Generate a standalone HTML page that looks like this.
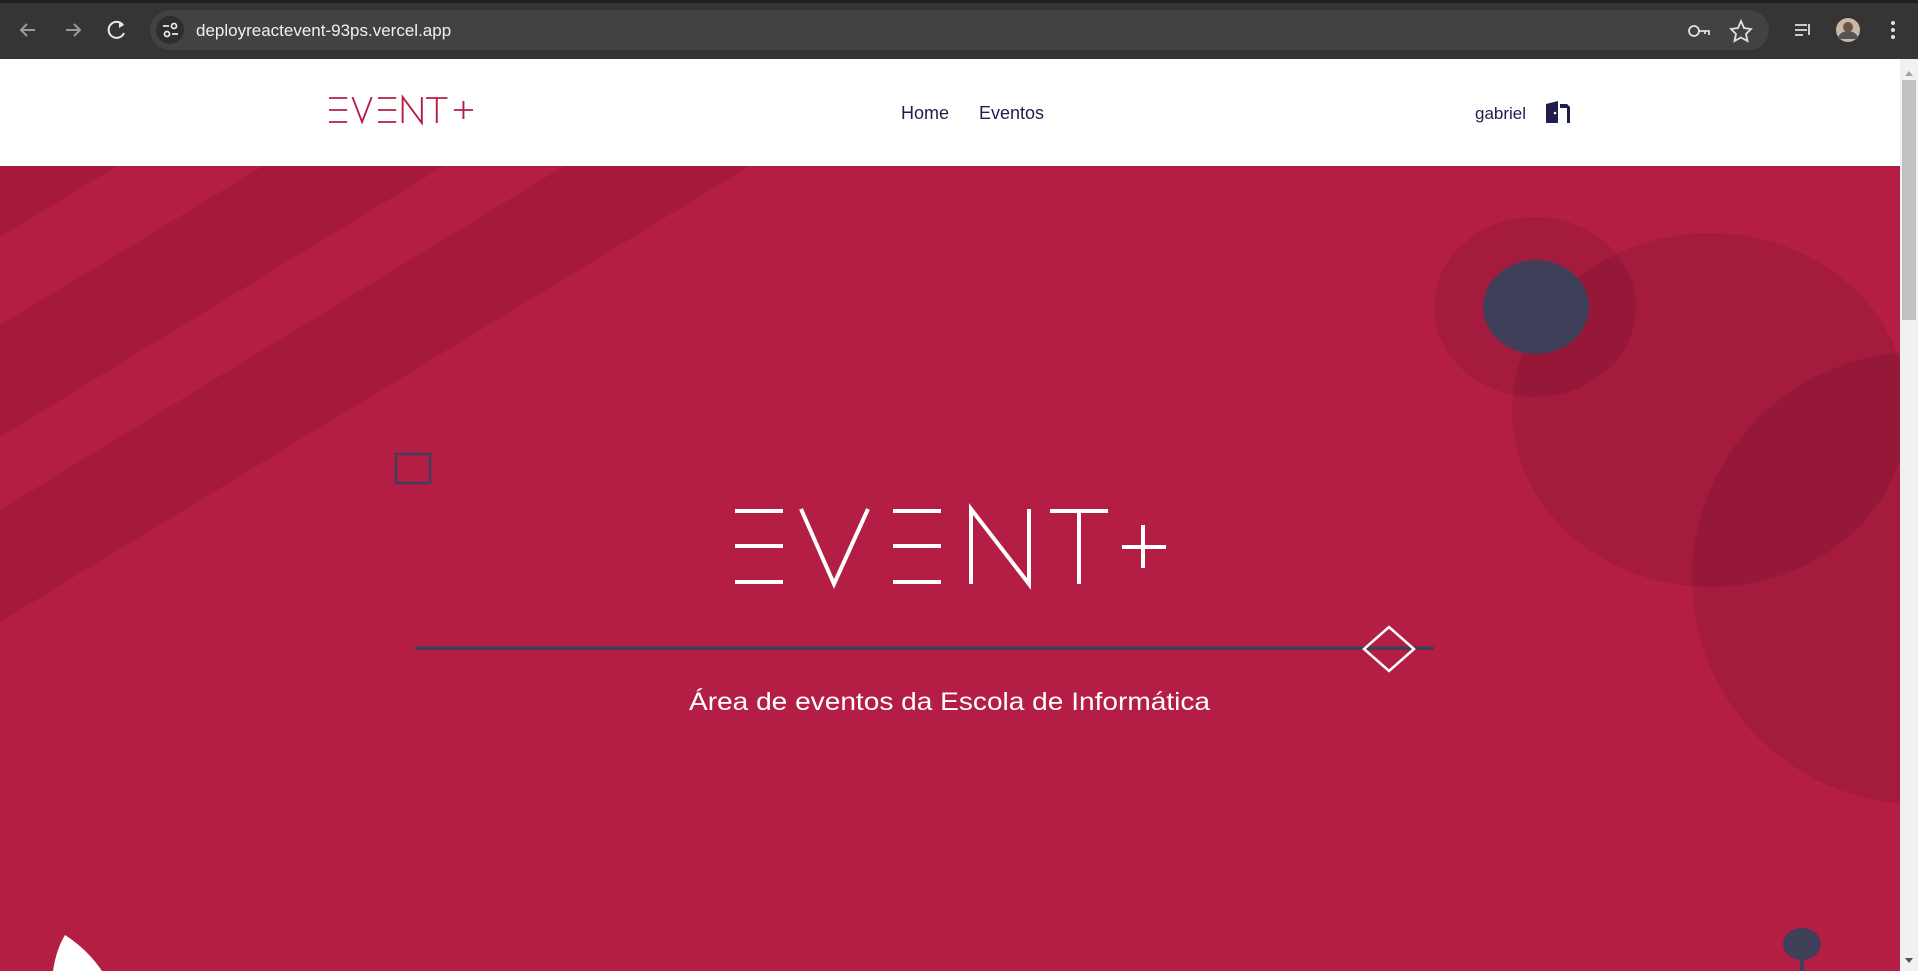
<!DOCTYPE html>
<html><head><meta charset="utf-8"><style>
html,body{margin:0;padding:0;width:1918px;height:971px;overflow:hidden;background:#fff;font-family:"Liberation Sans",sans-serif}
</style></head><body>
<svg width="1918" height="971" viewBox="0 0 1918 971" xmlns="http://www.w3.org/2000/svg" style="position:absolute;left:0;top:0">
<!-- browser chrome -->
<rect x="0" y="0" width="1918" height="59" fill="#353535"/>
<rect x="0" y="0" width="1918" height="3" fill="#1f1f1f"/>
<rect x="150" y="10" width="1619" height="40" rx="20" fill="#424242"/>
<circle cx="170" cy="30" r="14" fill="#2e2e2e"/>
<g stroke="#9a9a9a" stroke-width="2" fill="none">
<path d="M35 30H21M27 24l-6 6 6 6"/>
<path d="M66 30H80M74 24l6 6-6 6"/>
</g>
<path d="M123 25a8 8 0 1 0 1 8" stroke="#e8e8e8" stroke-width="2" fill="none"/>
<path d="M119 21l5 4-5 3z" fill="#e8e8e8"/>
<g stroke="#e8e8e8" stroke-width="1.8" fill="none"><path d="M163 26h6M172 34h6"/><circle cx="174" cy="26" r="2.5"/><circle cx="167" cy="34" r="2.5"/></g>
<text x="196" y="36" font-size="17" fill="#f0f0f0" font-family="Liberation Sans, sans-serif">deployreactevent-93ps.vercel.app</text>
<g stroke="#e0e0e0" stroke-width="1.8" fill="none"><circle cx="1694" cy="31" r="5"/><path d="M1699 31h10v4M1705 31v3"/>
<path d="M1741 21l3 7 7 1-5 5 1.5 7-6.5-3.5-6.5 3.5 1.5-7-5-5 7-1z"/>
<path d="M1795 25h12M1795 30h12M1795 35h8M1809 24v11"/></g>
<circle cx="1848" cy="30" r="12" fill="#c9b8a8"/><circle cx="1848" cy="27" r="5" fill="#6b5444"/><path d="M1838 39a10 8 0 0 1 20 0z" fill="#555"/>
<g fill="#e0e0e0"><circle cx="1893" cy="23" r="2"/><circle cx="1893" cy="30" r="2"/><circle cx="1893" cy="37" r="2"/></g>

<!-- header -->
<rect x="0" y="59" width="1900" height="107" fill="#fff"/>
<g stroke="#b51e44" stroke-width="1.8" fill="none" transform="translate(329,0) scale(1.067,1) translate(-329,0)">
<path d="M329 98h17M329 110h17M329 122h17"/>
<path d="M351 97l9 25 9-25"/>
<path d="M375 98h17M375 110h17M375 122h17"/>
<path d="M398 123V97l18 26V97"/>
<path d="M420 98h20M430 98v25"/>
<path d="M446 110h18M455 101v18"/>
</g>
<text x="901" y="119" font-size="18" fill="#1e1e4b">Home</text>
<text x="979" y="119" font-size="18" fill="#1e1e4b">Eventos</text>
<text x="1475" y="119" font-size="17" fill="#1e1e4b">gabriel</text>
<path d="M1546 123V104l12-3v22zM1560 104h7l3 3v16h-3v-15h-7z" fill="#1e1e4b"/>
<circle cx="1555" cy="113" r="1.3" fill="#fff"/>

<!-- hero -->
<rect x="0" y="166" width="1900" height="805" fill="#b51e44"/>
<g fill="#a51a3b">
<path d="M0 166H117L0 237Z"/>
<path d="M263 166H444L0 437V325Z"/>
<path d="M564 166H750L0 622V510Z"/>
</g>
<g fill="rgba(0,0,0,0.088)">
<ellipse cx="1710" cy="410" rx="198" ry="177"/>
<ellipse cx="1918" cy="578" rx="226" ry="226"/>
<ellipse cx="1535" cy="307" rx="101" ry="90"/>
</g>
<ellipse cx="1536" cy="307" rx="53" ry="47" fill="#3f3f5a"/>
<rect x="396" y="454" width="34" height="29" fill="none" stroke="#3f3f5a" stroke-width="2.5"/>
<g stroke="#fff" stroke-width="4" fill="none">
<path d="M735 511h48M735 546h48M735 582h48"/>
<path d="M801 509l33 75 34-75"/>
<path d="M893 511h48M893 546h48M893 582h48"/>
<path d="M971 584V509l58 75V509"/>
<path d="M1050 511h58M1079 511v73"/>
<path d="M1122 547h44M1143 525v43"/>
</g>
<rect x="415" y="646.5" width="1019" height="3.5" fill="#3f3f5a"/>
<path d="M1389 627l25 22-25 22-25-22z" fill="none" stroke="#fff" stroke-width="2.5"/>
<text x="689" y="710" font-size="25" fill="#fff" textLength="521" lengthAdjust="spacingAndGlyphs">Área de eventos da Escola de Informática</text>
<path d="M53 971Q56 950 65 935Q88 950 102 971Z" fill="#fff"/>
<ellipse cx="1802" cy="944" rx="19" ry="16" fill="#3f3f5a"/>
<rect x="1800" y="955" width="4" height="16" fill="#3f3f5a"/>

<!-- scrollbar -->
<rect x="1900" y="59" width="18" height="912" fill="#f1f1f1"/>
<rect x="1902" y="80" width="14" height="240" fill="#c1c1c1"/>
<path d="M1905 76l4-5 4 5z" fill="#a3a3a3"/>
<path d="M1905 958l4 5 4-5z" fill="#505050"/>
</svg>
</body></html>
